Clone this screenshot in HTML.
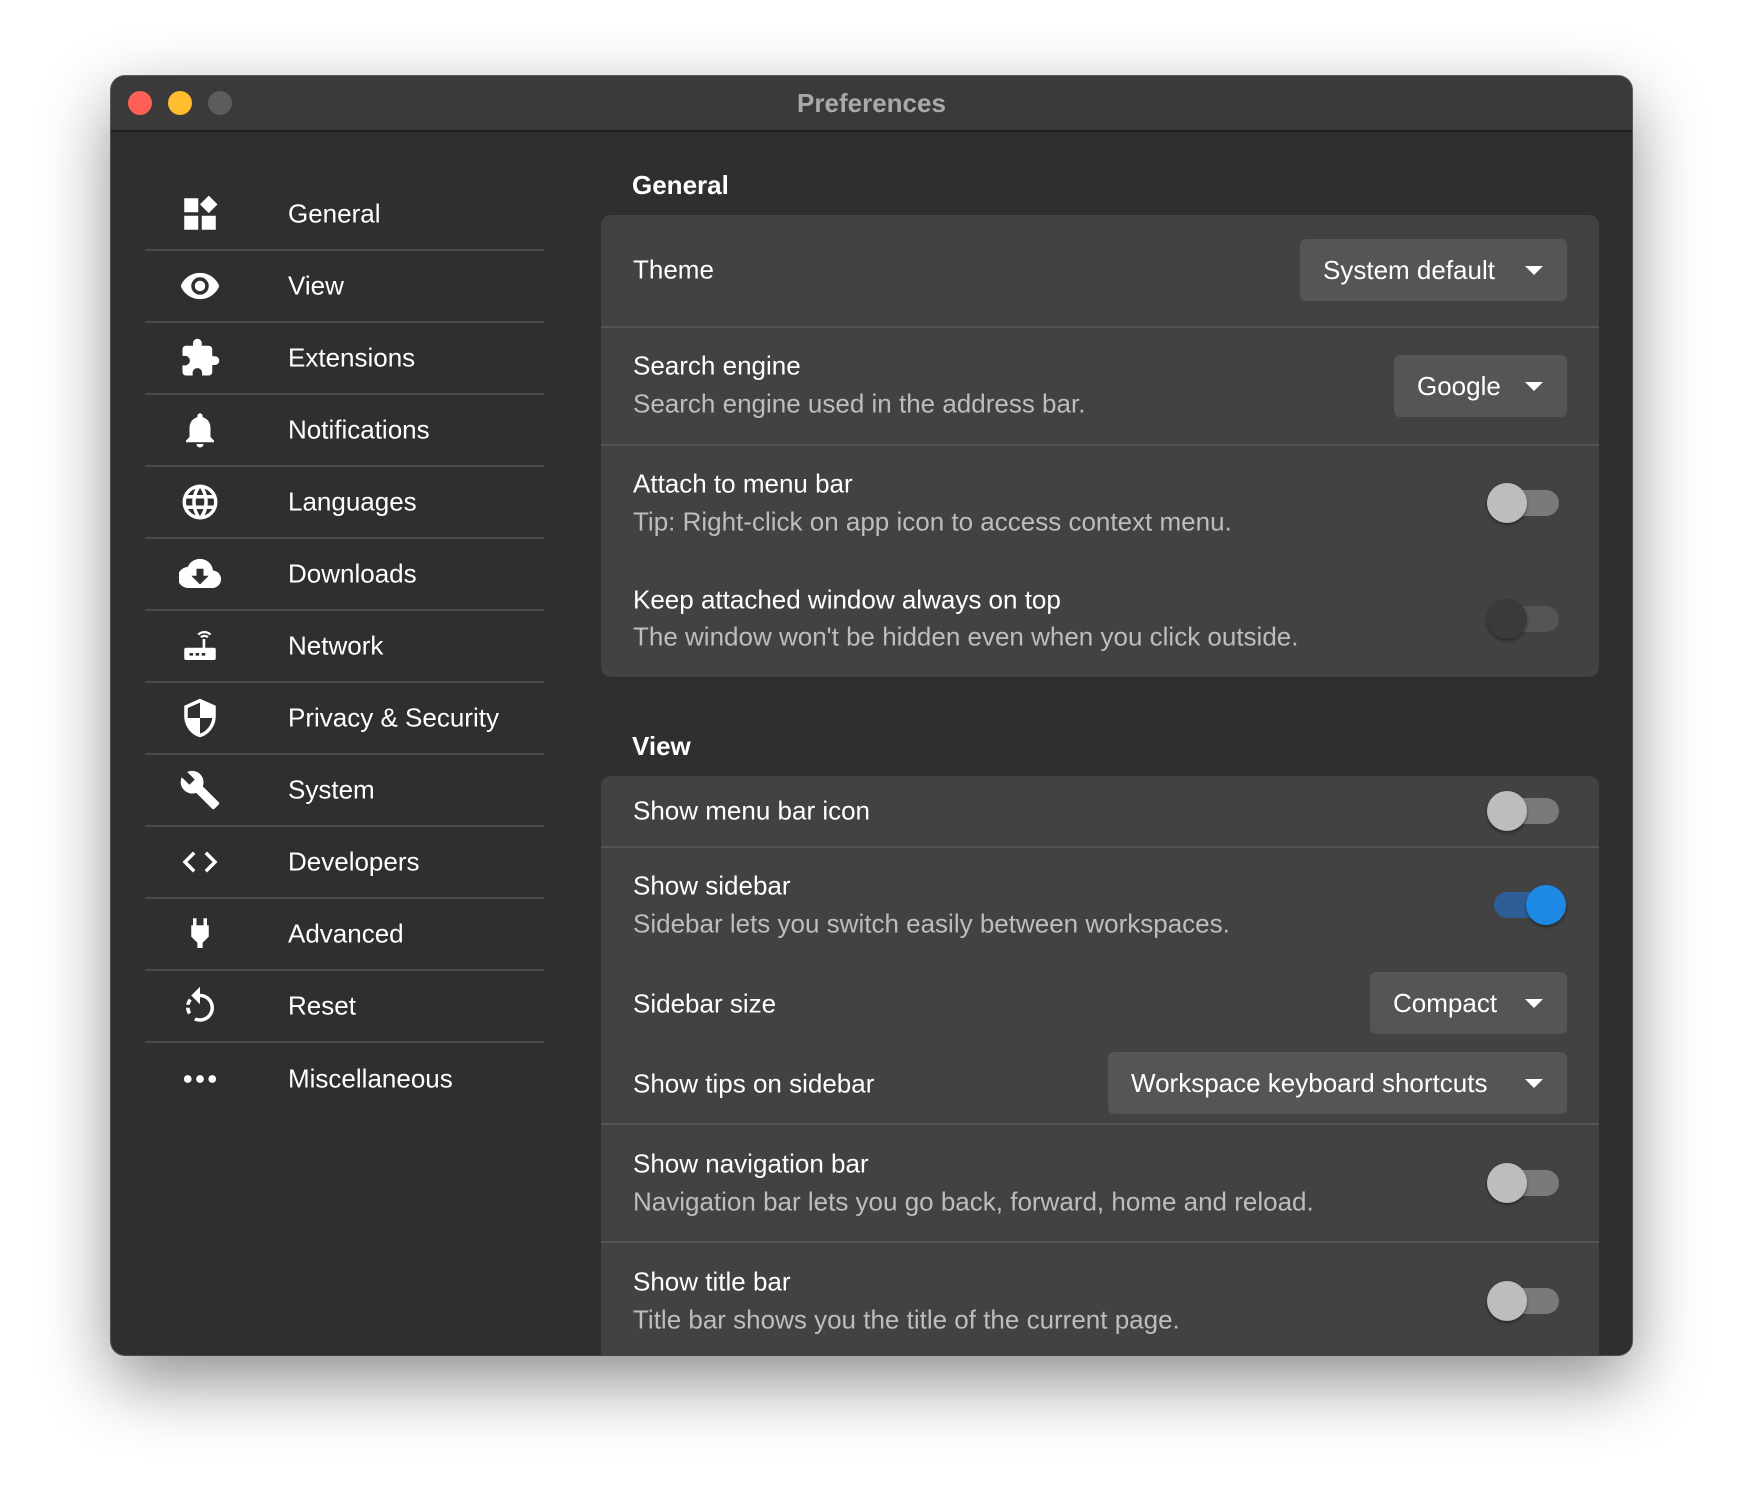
<!DOCTYPE html>
<html><head><meta charset="utf-8"><style>
*{margin:0;padding:0;box-sizing:border-box}
body{width:1744px;height:1504px;background:#fff;font-family:"Liberation Sans",sans-serif;position:relative;overflow:hidden}
.win{position:absolute;left:111px;top:76px;width:1521px;height:1279px;border-radius:14px;background:#2f2f2f;overflow:hidden;box-shadow:0 26px 70px rgba(0,0,0,.45),0 0 0 1px rgba(0,0,0,.6)}
.tb{position:absolute;left:0;top:0;right:0;height:56px;background:#3a3a3a;border-bottom:2px solid #1e1e1e}
.tl{position:absolute;top:15px;width:24px;height:24px;border-radius:50%}
.ttl{position:absolute;left:0;right:0;top:12px;text-align:center;color:#a9a9a9;font-weight:bold;font-size:26px}
.nav{position:absolute;left:34px;width:399px;height:72px;color:#fff;font-size:26px}
.nav .lbl{position:absolute;left:143px;top:50%;transform:translateY(-50%)}
.nav svg{position:absolute;left:34px;top:50%;transform:translateY(-50%);width:42px;height:42px;fill:#fff}
.nav.sep{border-bottom:2px solid #4a4a4a}
.h{position:absolute;color:#fff;font-weight:bold;font-size:26px}
.card{position:absolute;left:490px;width:998px;background:#424242;border-radius:10px}
.t{position:absolute;left:32px;color:#fff;font-size:26px;transform:translateY(-50%)}
.d{position:absolute;left:32px;color:#bdbdbd;font-size:26px;transform:translateY(-50%)}
.line{position:absolute;left:0;right:0;height:2px;background:#545454}
.dd{position:absolute;right:32px;height:62px;background:#555;border-radius:6px;color:#fff;font-size:26px;padding-left:23px;line-height:62px}
.dd:after{content:"";position:absolute;right:24px;top:27px;border-left:9px solid transparent;border-right:9px solid transparent;border-top:9px solid #fff}
.tg{position:absolute;right:40px;width:72px;height:40px;transform:translateY(-50%)}
.tg .tr{position:absolute;left:10px;right:0;top:7px;height:26px;border-radius:13px;background:#7a7a7a}
.tg .kn{position:absolute;left:0;top:0;width:40px;height:40px;border-radius:50%;background:#bdbdbd;box-shadow:0 2px 3px rgba(0,0,0,.4)}
.tg.dis .tr{background:#555}.tg.dis .kn{background:#3a3a3a}
.tg.on .tr{background:#2d5f96;left:0;right:10px}.tg.on .kn{left:32px;background:#1e88e5}
</style></head><body>
<div class="win">
 <div class="tb">
  <div class="tl" style="left:17px;background:#fe5f57"></div>
  <div class="tl" style="left:57px;background:#febc2e"></div>
  <div class="tl" style="left:97px;background:#5c5c5c"></div>
  <div class="ttl">Preferences</div>
 </div>

 <div class="nav sep" style="top:103px"><svg viewBox="0 0 24 24"><path d="M3 3h8v8H3zM3 13h8v8H3zM13 13h8v8h-8zM17 1.5l5 5-5 5-5-5z"/></svg><span class="lbl">General</span></div>
 <div class="nav sep" style="top:175px"><svg viewBox="0 0 24 24"><path d="M12 4.5C7 4.5 2.7 7.6 1 12c1.7 4.4 6 7.5 11 7.5s9.3-3.1 11-7.5c-1.7-4.4-6-7.5-11-7.5zM12 17a5 5 0 110-10 5 5 0 010 10zm0-8a3 3 0 100 6 3 3 0 000-6z"/></svg><span class="lbl">View</span></div>
 <div class="nav sep" style="top:247px"><svg viewBox="0 0 24 24"><path d="M20.5 11H19V7c0-1.1-.9-2-2-2h-4V3.5a2.5 2.5 0 00-5 0V5H4c-1.1 0-2 .9-2 2v3.8h1.5c1.5 0 2.7 1.2 2.7 2.7S5 16.2 3.5 16.2H2V20c0 1.1.9 2 2 2h3.8v-1.5c0-1.5 1.2-2.7 2.7-2.7s2.7 1.2 2.7 2.7V22H17c1.1 0 2-.9 2-2v-4h1.5a2.5 2.5 0 000-5z"/></svg><span class="lbl">Extensions</span></div>
 <div class="nav sep" style="top:319px"><svg viewBox="0 0 24 24"><path d="M12 22c1.1 0 2-.9 2-2h-4c0 1.1.9 2 2 2zm6-6v-5c0-3.1-1.6-5.6-4.5-6.3V4c0-.8-.7-1.5-1.5-1.5s-1.5.7-1.5 1.5v.7C7.6 5.4 6 7.9 6 11v5l-2 2v1h16v-1l-2-2z"/></svg><span class="lbl">Notifications</span></div>
 <div class="nav sep" style="top:391px"><svg viewBox="0 0 24 24"><path d="M12 2a10 10 0 100 20 10 10 0 000-20zm6.9 6h-3a15.7 15.7 0 00-1.4-3.6A8 8 0 0118.9 8zM12 4c.8 1.2 1.5 2.5 1.9 4h-3.8c.4-1.4 1.1-2.8 1.9-4zM4.3 14a8 8 0 010-4h3.4a16 16 0 000 4H4.3zm.8 2h3c.3 1.3.8 2.5 1.4 3.6A8 8 0 015.1 16zm3-8h-3a8 8 0 014.3-3.6C8.9 5.5 8.4 6.7 8.1 8zM12 20c-.8-1.2-1.5-2.5-1.9-4h3.8c-.4 1.4-1.1 2.800-1.9 4zm2.3-6H9.7a14.7 14.7 0 010-4h4.6a14.7 14.7 0 010 4zm.3 5.6c.6-1.1 1.1-2.3 1.4-3.6h3a8 8 0 01-4.4 3.6zm1.7-5.6a16 16 0 000-4h3.4a8 8 0 010 4h-3.4z"/></svg><span class="lbl">Languages</span></div>
 <div class="nav sep" style="top:463px"><svg viewBox="0 0 24 24"><path d="M19.4 10A7.5 7.5 0 005 8a6 6 0 00.6 12h13a5 5 0 00.8-10zM17 13l-5 5-5-5h3V9h4v4h3z"/></svg><span class="lbl">Downloads</span></div>
 <div class="nav sep" style="top:535px"><svg viewBox="0 0 24 24"><path d="M15 13V8h-1.5v5H4a1 1 0 00-1 1v5a1 1 0 001 1h16a1 1 0 001-1v-5a1 1 0 00-1-1h-5zM6 16h2v1.5H6zm3.5 0h2v1.5h-2zm3.5 0h2v1.5h-2z"/><path d="M11 5.5a5 5 0 017 0M12.5 7a3 3 0 014 0" stroke="#fff" stroke-width="1.3" fill="none"/></svg><span class="lbl">Network</span></div>
 <div class="nav sep" style="top:607px"><svg viewBox="0 0 24 24"><path d="M12 1L3 5v6c0 5.5 3.8 10.7 9 12 5.2-1.3 9-6.5 9-12V5l-9-4zm0 11h7c-.5 4.1-3.3 7.8-7 8.9V12H5V6.3l7-3.1V12z"/></svg><span class="lbl">Privacy &amp; Security</span></div>
 <div class="nav sep" style="top:679px"><svg viewBox="0 0 24 24"><path d="M22.7 19l-9.1-9.1c.9-2.3.4-5-1.5-6.9-2-2-5-2.4-7.4-1.3L9 6 6 9 1.6 4.7C.4 7.1.9 10.1 2.9 12.1c1.9 1.9 4.6 2.4 6.9 1.5l9.1 9.1c.4.4 1 .4 1.4 0l2.3-2.3c.5-.4.5-1.1.1-1.4z"/></svg><span class="lbl">System</span></div>
 <div class="nav sep" style="top:751px"><svg viewBox="0 0 24 24"><path d="M9.4 16.6L4.8 12l4.6-4.6L8 6l-6 6 6 6 1.4-1.4zm5.2 0l4.6-4.6-4.6-4.6L16 6l6 6-6 6-1.4-1.4z"/></svg><span class="lbl">Developers</span></div>
 <div class="nav sep" style="top:823px"><svg viewBox="0 0 24 24"><path d="M16 7V3h-2v4h-4V3H8v4H7v6.5L10.5 17v3h3v-3l3.5-3.5V7z"/></svg><span class="lbl">Advanced</span></div>
 <div class="nav sep" style="top:895px"><svg viewBox="0 0 24 24"><path d="M12 5V1L7 6l5 5V7c3.3 0 6 2.7 6 6s-2.7 6-6 6c-.9 0-1.7-.2-2.4-.5l-1 1.7c1 .5 2.2.8 3.4.8 4.4 0 8-3.6 8-8s-3.6-8-8-8zM6.1 13H4c.1 1.4.5 2.7 1.2 3.8l1.7-1c-.4-.8-.7-1.8-.8-2.8zm1.2-4.2l-1.7-1C4.8 8.9 4.3 10 4.1 11.3h2.1c.1-.9.5-1.8 1.1-2.5z"/></svg><span class="lbl">Reset</span></div>
 <div class="nav" style="top:967px"><svg viewBox="0 0 24 24"><circle cx="5" cy="12" r="2.2"/><circle cx="12" cy="12" r="2.2"/><circle cx="19" cy="12" r="2.2"/></svg><span class="lbl">Miscellaneous</span></div>

 <div class="h" style="left:521px;top:94px">General</div>
 <div class="card" style="top:139px;height:462px">
  <div class="t" style="top:55px">Theme</div>
  <div class="dd" style="top:24px;width:267px">System default</div>
  <div class="line" style="top:111px"></div>
  <div class="t" style="top:151px">Search engine</div>
  <div class="d" style="top:189px">Search engine used in the address bar.</div>
  <div class="dd" style="top:140px;width:173px">Google</div>
  <div class="line" style="top:229px"></div>
  <div class="t" style="top:269px">Attach to menu bar</div>
  <div class="d" style="top:307px">Tip: Right-click on app icon to access context menu.</div>
  <div class="tg" style="top:288px"><div class="tr"></div><div class="kn"></div></div>
  <div class="t" style="top:385px">Keep attached window always on top</div>
  <div class="d" style="top:422px">The window won't be hidden even when you click outside.</div>
  <div class="tg dis" style="top:404px"><div class="tr"></div><div class="kn"></div></div>
 </div>

 <div class="h" style="left:521px;top:655px">View</div>
 <div class="card" style="top:700px;height:620px">
  <div class="t" style="top:35px">Show menu bar icon</div>
  <div class="tg" style="top:35px"><div class="tr"></div><div class="kn"></div></div>
  <div class="line" style="top:70px"></div>
  <div class="t" style="top:110px">Show sidebar</div>
  <div class="d" style="top:148px">Sidebar lets you switch easily between workspaces.</div>
  <div class="tg on" style="top:129px;right:33px"><div class="tr"></div><div class="kn"></div></div>
  <div class="t" style="top:228px">Sidebar size</div>
  <div class="dd" style="top:196px;width:197px">Compact</div>
  <div class="t" style="top:308px">Show tips on sidebar</div>
  <div class="dd" style="top:276px;width:459px">Workspace keyboard shortcuts</div>
  <div class="line" style="top:347px"></div>
  <div class="t" style="top:388px">Show navigation bar</div>
  <div class="d" style="top:426px">Navigation bar lets you go back, forward, home and reload.</div>
  <div class="tg" style="top:407px"><div class="tr"></div><div class="kn"></div></div>
  <div class="line" style="top:465px"></div>
  <div class="t" style="top:506px">Show title bar</div>
  <div class="d" style="top:544px">Title bar shows you the title of the current page.</div>
  <div class="tg" style="top:525px"><div class="tr"></div><div class="kn"></div></div>
 </div>
</div>
</body></html>
